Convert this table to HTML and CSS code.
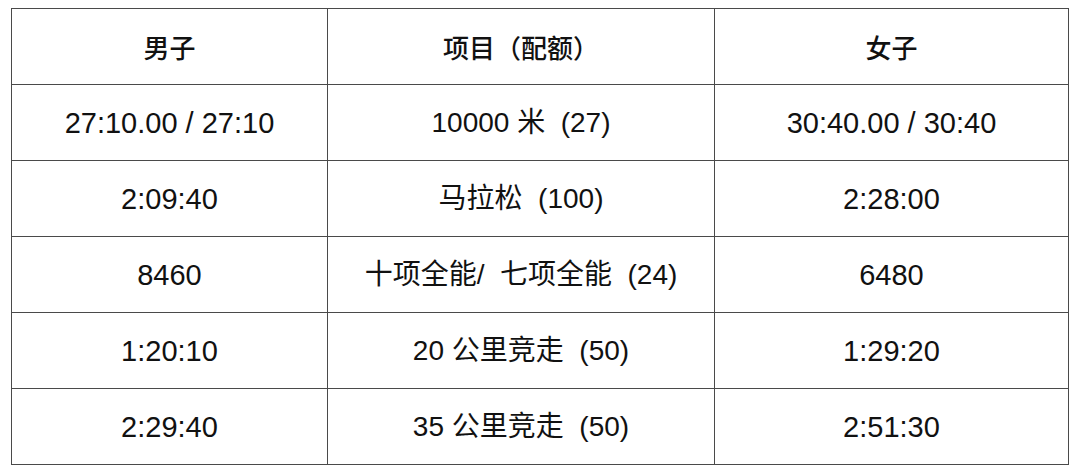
FILE: index.html
```html
<!DOCTYPE html>
<html lang="zh">
<head>
<meta charset="utf-8">
<link rel="stylesheet" href="styles.css">
</head>
<body>
<table class="quota">
  <colgroup>
    <col class="c1"><col class="c2"><col class="c3">
  </colgroup>
  <thead>
    <tr><th>男子</th><th>项目（配额）</th><th>女子</th></tr>
  </thead>
  <tbody>
    <tr><td class="num">27:10.00 / 27:10</td><td>10000 米&nbsp; (27)</td><td class="num">30:40.00 / 30:40</td></tr>
    <tr><td class="num">2:09:40</td><td>马拉松&nbsp; (100)</td><td class="num">2:28:00</td></tr>
    <tr><td class="num">8460</td><td>十项全能/&nbsp; 七项全能&nbsp; (24)</td><td class="num">6480</td></tr>
    <tr><td class="num">1:20:10</td><td>20 公里竞走&nbsp; (50)</td><td class="num">1:29:20</td></tr>
    <tr><td class="num">2:29:40</td><td>35 公里竞走&nbsp; (50)</td><td class="num">2:51:30</td></tr>
  </tbody>
</table>
</body>
</html>
```
FILE: styles.css
```css
html, body {
  margin: 0;
  padding: 0;
  background: #fff;
}
body {
  padding: 8px 0 0 11px;
  font-family: "Liberation Sans", "Noto Sans CJK SC", sans-serif;
  color: #111;
}
.quota {
  border-collapse: collapse;
  width: 1057px;
  table-layout: fixed;
}
.c1 { width: 316px; }
.c2 { width: 387px; }
.c3 { width: 354px; }
.quota th,
.quota td {
  border: 1px solid #4a4a4a;
  height: 75px;
  padding: 0;
  text-align: center;
  vertical-align: middle;
  font-size: 28px;
  line-height: 34px;
  white-space: nowrap;
}
.quota th {
  font-weight: 500;
  font-family: "Noto Sans CJK SC", sans-serif;
  font-size: 26px;
}
.quota td {
  font-weight: 400;
}
.quota td.num {
  font-size: 29px;
}
```
